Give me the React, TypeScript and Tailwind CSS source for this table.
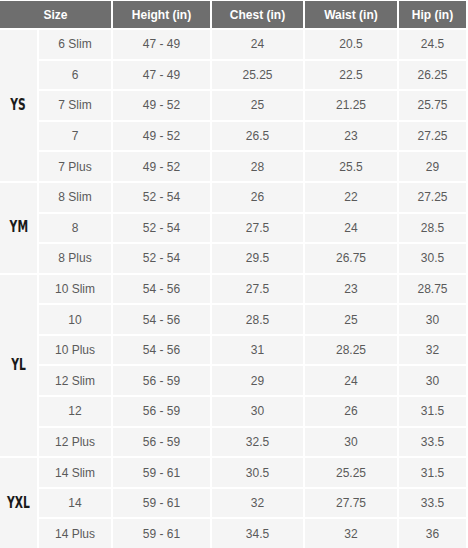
import React from 'react';

type Row = [string, string, string, string, string];

const groups: { label: string; rows: Row[] }[] = [
    {
        label: 'YS',
        rows: [
            ['6 Slim', '47 - 49', '24', '20.5', '24.5'],
            ['6', '47 - 49', '25.25', '22.5', '26.25'],
            ['7 Slim', '49 - 52', '25', '21.25', '25.75'],
            ['7', '49 - 52', '26.5', '23', '27.25'],
            ['7 Plus', '49 - 52', '28', '25.5', '29'],
        ],
    },
    {
        label: 'YM',
        rows: [
            ['8 Slim', '52 - 54', '26', '22', '27.25'],
            ['8', '52 - 54', '27.5', '24', '28.5'],
            ['8 Plus', '52 - 54', '29.5', '26.75', '30.5'],
        ],
    },
    {
        label: 'YL',
        rows: [
            ['10 Slim', '54 - 56', '27.5', '23', '28.75'],
            ['10', '54 - 56', '28.5', '25', '30'],
            ['10 Plus', '54 - 56', '31', '28.25', '32'],
            ['12 Slim', '56 - 59', '29', '24', '30'],
            ['12', '56 - 59', '30', '26', '31.5'],
            ['12 Plus', '56 - 59', '32.5', '30', '33.5'],
        ],
    },
    {
        label: 'YXL',
        rows: [
            ['14 Slim', '59 - 61', '30.5', '25.25', '31.5'],
            ['14', '59 - 61', '32', '27.75', '33.5'],
            ['14 Plus', '59 - 61', '34.5', '32', '36'],
        ],
    },
];

const headers = ['Height (in)', 'Chest (in)', 'Waist (in)', 'Hip (in)'];

export default function App() {
    // body rows start at grid row 2
    let rowStart = 2;
    const starts = groups.map((g) => {
        const s = rowStart;
        rowStart += g.rows.length;
        return s;
    });

    return (
        <div className="w-[468px] h-[548px] bg-white pt-px font-['Liberation_Sans',Arial,sans-serif]">
            <div className="grid w-[466px] h-[547px] gap-[2px] grid-cols-[37px_72px_97px_91px_92px_67px] grid-rows-[27px_repeat(17,minmax(0,1fr))]">
                <div className="col-start-1 col-span-2 row-start-1 bg-[#6e6e6e] text-white font-bold text-[12px] flex items-center justify-center">
                    Size
                </div>
                {headers.map((h, i) => (
                    <div
                        key={h}
                        className="row-start-1 bg-[#6e6e6e] text-white font-bold text-[12px] flex items-center justify-center"
                        style={{ gridColumnStart: i + 3 }}
                    >
                        {h}
                    </div>
                ))}
                {groups.map((g, gi) => (
                    <React.Fragment key={g.label}>
                        <div
                            className="col-start-1 bg-[#f5f5f5] flex items-center justify-center text-[#1a1a1a] font-bold text-[14px] font-['DejaVu_Sans_Condensed','Liberation_Sans_Narrow',sans-serif]"
                            style={{ gridRow: `${starts[gi]} / span ${g.rows.length}` }}
                        >
                            <span className="inline-block scale-x-[0.85] scale-y-110">{g.label}</span>
                        </div>
                        {g.rows.map((r, i) => (
                            <React.Fragment key={i}>
                                {r.map((c, j) => (
                                    <div
                                        key={j}
                                        className="bg-[#f5f5f5] flex items-center justify-center text-[#5a5a5a] text-[12px]"
                                        style={{ gridColumnStart: j + 2, gridRowStart: starts[gi] + i }}
                                    >
                                        {c}
                                    </div>
                                ))}
                            </React.Fragment>
                        ))}
                    </React.Fragment>
                ))}
            </div>
        </div>
    );
}
